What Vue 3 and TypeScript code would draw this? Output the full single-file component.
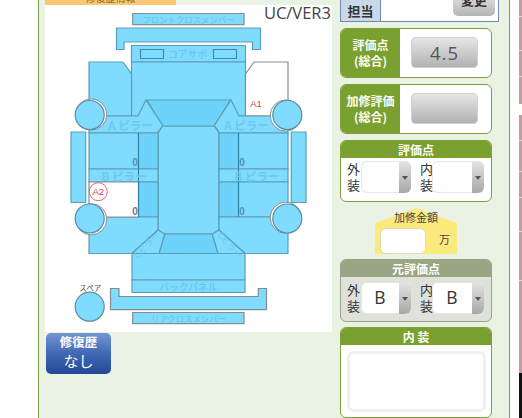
<script setup lang="ts">
const fill = '#7fdcff'
const dark = '#6dd3fb'
const edge = '#5d9db5'
const white = '#ffffff'
const gray = '#858d90'

interface Shape { p: string; f: string; s: string }

const mirror = (pts: string): string =>
  pts.split(' ').map((pair) => {
    const [x, y] = pair.split(',').map(Number)
    return `${377 - x},${y}`
  }).join(' ')

const leftSide: Shape[] = [
  { p: '89,62 123,62 131.5,74 131.5,116 89,116', f: fill, s: edge },
  { p: '89,116 138,116 146,100 162.7,125.5 157.5,133 89,133', f: fill, s: edge },
  { p: '89,133 138.5,133 138.5,169 89,169', f: fill, s: edge },
  { p: '138.5,133 158,133 158,169 138.5,169', f: dark, s: edge },
  { p: '89,169 158,169 158,182 89,182', f: fill, s: edge },
  { p: '138.5,182 158,182 158,217 138.5,217', f: dark, s: edge },
  { p: '89,217 158,217 158,230 132,253.5 89,253.5', f: fill, s: edge },
  { p: '158,230 164.7,234 159,253.5 132,253.5', f: fill, s: edge },
  { p: '71,132 85.7,132 85.7,202.5 71,202.5', f: fill, s: edge },
]
const rightSide: Shape[] = [
  { p: mirror('89,62 123,62 131.5,74 131.5,116 89,116'), f: white, s: gray },
  { p: mirror('89,116 138,116 146,100 162.7,125.5 157.5,133 89,133'), f: fill, s: edge },
  { p: mirror('89,133 138.5,133 138.5,169 89,169'), f: fill, s: edge },
  { p: mirror('138.5,133 158,133 158,169 138.5,169'), f: dark, s: edge },
  { p: mirror('89,169 158,169 158,182 89,182'), f: fill, s: edge },
  { p: mirror('89,182 138.5,182 138.5,217 89,217'), f: fill, s: edge },
  { p: mirror('138.5,182 158,182 158,217 138.5,217'), f: dark, s: edge },
  { p: mirror('89,217 158,217 158,230 132,253.5 89,253.5'), f: fill, s: edge },
  { p: mirror('158,230 164.7,234 159,253.5 132,253.5'), f: fill, s: edge },
  { p: mirror('71,132 85.7,132 85.7,202.5 71,202.5'), f: fill, s: edge },
]
const center: Shape[] = [
  { p: '132.7,13.5 244,13.5 244,24.7 132.7,24.7', f: fill, s: gray },
  { p: '116.5,28 260.5,28 260.5,49.5 252.5,49.5 252.5,42 124,42 124,49.5 116.5,49.5', f: fill, s: edge },
  { p: '131.5,45.5 245.5,45.5 245.5,62 131.5,62', f: fill, s: edge },
  { p: '131.5,62 245.5,62 245.5,116 131.5,116', f: fill, s: edge },
  { p: '140.5,49.5 163.5,49.5 163.5,58.5 140.5,58.5', f: fill, s: '#3f8aa6' },
  { p: '213.5,49.5 236.5,49.5 236.5,58.5 213.5,58.5', f: fill, s: '#3f8aa6' },
  { p: '158,133 162.7,126 214.3,126 219,133 219,230 212.3,234 164.7,234 158,230', f: fill, s: edge },
  { p: '146.7,100 230.3,100 214.3,126 162.7,126', f: dark, s: edge },
  { p: '164.7,234 212.3,234 218,253.5 159,253.5', f: dark, s: edge },
  { p: '132,253.5 245,253.5 245,280 132,280', f: fill, s: edge },
  { p: '132,280 245,280 245,292.5 132,292.5', f: fill, s: edge },
  { p: '110.5,288.5 119,288.5 119,296.5 258.3,296.5 258.3,288.5 266.5,288.5 266.5,309.7 110.5,309.7', f: fill, s: gray },
  { p: '132.7,312.5 244,312.5 244,323.7 132.7,323.7', f: fill, s: gray },
]
const shapes: Shape[] = [
  ...center,
  ...leftSide,
  ...rightSide,
  { p: '89,182 138.5,182 138.5,217 89,217', f: white, s: gray },
]

interface Tire { x: number; y: number; dx: number; dy: number }
const tires: Tire[] = [
  { x: 89.7, y: 115, dx: 1.5, dy: -0.5 },
  { x: 287.3, y: 115, dx: -1.5, dy: 0.5 },
  { x: 89.7, y: 218.5, dx: 1.5, dy: 0.8 },
  { x: 287.3, y: 218.5, dx: -1.5, dy: -0.8 },
]

interface Label { t: string; x: number; y: number; c: string }
const labels: Label[] = [
  { t: 'フロントクロスメンバー', x: 188.5, y: 19, c: 'lbl-xs' },
  { t: 'コアサポ', x: 187.5, y: 54, c: 'lbl-sm' },
  { t: 'バックパネル', x: 188.5, y: 286.5, c: 'lbl-sm' },
  { t: 'リアクロスメンバー', x: 188.5, y: 318, c: 'lbl-xs' },
  { t: 'A ピラー', x: 130.5, y: 125, c: 'lbl-lg' },
  { t: 'A ピラー', x: 246.5, y: 125, c: 'lbl-lg' },
  { t: 'B ピラー', x: 124, y: 175.5, c: 'lbl-lg' },
  { t: 'B ピラー', x: 257, y: 175.5, c: 'lbl-lg' },
  { t: '0', x: 135, y: 162.5, c: 'zero' },
  { t: '0', x: 242, y: 162.5, c: 'zero' },
  { t: '0', x: 135, y: 211.5, c: 'zero-dark' },
  { t: '0', x: 242, y: 211.5, c: 'zero' },
  { t: 'スペア', x: 90.3, y: 287, c: 'spare' },
  { t: 'A1', x: 256, y: 103, c: 'mark' },
  { t: 'A2', x: 98.3, y: 191.5, c: 'mark' },
]
const stripes: number[] = [16, 50, 76, 140, 171, 197, 231, 280]

const scoreA = [
  { label: '外装', value: '', cls: 'sel-a' },
  { label: '内装', value: '', cls: 'sel-b' },
]
const scoreB = [
  { label: '外装', value: 'B', cls: 'sel-a' },
  { label: '内装', value: 'B', cls: 'sel-b' },
]
</script>

<template>
  <div class="page">
    <main class="panel">
      <section class="left">
        <div class="tab"><span>修復歴情報</span></div>
        <div class="canvas">
          <span class="ver">UC/VER3</span>
          <svg class="car" viewBox="45 5 287 327" width="287" height="327">
            <polygon v-for="(s, i) in shapes" :key="i" :points="s.p" :fill="s.f" :stroke="s.s" stroke-width="1.2" />
            <line x1="138.5" y1="133" x2="138.5" y2="217" stroke="#2f7f9c" stroke-width="1" />
            <line x1="238.5" y1="133" x2="238.5" y2="217" stroke="#2f7f9c" stroke-width="1" />
            <g v-for="(t, i) in tires" :key="'t' + i">
              <circle :cx="t.x + t.dx" :cy="t.y + t.dy" r="15.6" fill="#fff" stroke="#8a8a8a" stroke-width="1" />
              <circle :cx="t.x" :cy="t.y" r="14.5" fill="#7fdcff" stroke="#5d8fa3" stroke-width="1.2" />
            </g>
            <circle cx="89.7" cy="306.7" r="14.5" fill="#7fdcff" stroke="#5d8fa3" stroke-width="1.2" />
            <circle cx="98.3" cy="191.7" r="9" fill="#fff" stroke="#e0414f" stroke-width="0.8" />
            <text v-for="(l, i) in labels" :key="'l' + i" :x="l.x" :y="l.y" :class="l.c" text-anchor="middle" dominant-baseline="central">{{ l.t }}</text>
            <text class="lbl-rot" transform="translate(146.5 245) rotate(-48)" text-anchor="middle" dominant-baseline="central">Cピラー</text>
            <text class="lbl-rot" transform="translate(230.5 245) rotate(48)" text-anchor="middle" dominant-baseline="central">Cピラー</text>
          </svg>
        </div>
        <button class="history" type="button">
          <b>修復歴</b>
          <span>なし</span>
        </button>
      </section>

      <section class="right">
        <div class="staff">
          <div class="staff-label">担当</div>
          <div class="staff-body"><button class="change" type="button">変更</button></div>
        </div>

        <div class="score-card">
          <div class="score-head">評価点<br />(総合)</div>
          <div class="score-body"><button class="score-btn" type="button">4.5</button></div>
        </div>
        <div class="score-card second">
          <div class="score-head">加修評価<br />(総合)</div>
          <div class="score-body"><button class="score-btn" type="button"></button></div>
        </div>

        <div class="card card-score">
          <div class="card-head">評価点</div>
          <div class="sel-row">
            <template v-for="g in scoreA" :key="g.label">
              <span class="sel-label">{{ g.label }}</span>
              <div class="sel" :class="g.cls"><span class="sel-val">{{ g.value }}</span><span class="sel-arrow"></span></div>
            </template>
          </div>
        </div>

        <div class="repair">
          <div class="repair-title">加修金額</div>
          <div class="repair-row">
            <div class="repair-input"></div>
            <span class="repair-unit">万</span>
          </div>
        </div>

        <div class="card card-orig">
          <div class="card-head head-gray">元評価点</div>
          <div class="sel-row">
            <template v-for="g in scoreB" :key="g.label">
              <span class="sel-label">{{ g.label }}</span>
              <div class="sel" :class="g.cls"><span class="sel-val">{{ g.value }}</span><span class="sel-arrow"></span></div>
            </template>
          </div>
        </div>

        <div class="card card-inner">
          <div class="card-head">内 装</div>
          <div class="note-wrap"><div class="note"></div></div>
        </div>
      </section>
    </main>

    <aside class="edge">
      <div class="pink pink-a">
        <i v-for="y in stripes.slice(0, 3)" :key="y" class="sep"></i>
      </div>
      <div class="pink pink-b">
        <i v-for="y in stripes.slice(3)" :key="y" class="sep"></i>
      </div>
      <div class="black"></div>
    </aside>
  </div>
</template>

<style scoped>
.page {
  width: 522px;
  height: 418px;
  overflow: hidden;
  background: #fff;
  display: flex;
  padding-left: 38px;
  box-sizing: border-box;
  font-family: "Noto Sans CJK JP", "Noto Sans", sans-serif;
}
.panel {
  width: 472px;
  height: 418px;
  box-sizing: border-box;
  flex: none;
  display: flex;
  background: #eaf2e3;
  border-left: 1px solid #7f9c4a;
  border-right: 1px solid #7f9c4a;
  padding-left: 6px;
}
.left {
  width: 287px;
  flex: none;
  display: flex;
  flex-direction: column;
}
.tab {
  width: 131px;
  height: 5px;
  background: #fbc973;
  overflow: hidden;
  text-align: center;
  font-size: 10px;
  line-height: 4px;
  color: #8a6a30;
}
.tab span { display: block; margin-top: -4px; }
.canvas {
  position: relative;
  width: 287px;
  height: 327px;
  background: #fff;
}
.car { display: block; }
.ver {
  position: absolute;
  right: 1px;
  top: -2px;
  font-family: "Open Sans", sans-serif;
  font-size: 16.5px;
  line-height: 19px;
  color: #444;
}
.lbl-xs { font-size: 8.4px; fill: #66c8ec; font-weight: 500; }
.lbl-sm { font-size: 9.8px; fill: #66c8ec; font-weight: 500; }
.lbl-lg { font-size: 11.5px; fill: #6ccaee; font-weight: 700; }
.lbl-rot { font-size: 9px; fill: #66c8ec; }
.zero { font-size: 10px; font-weight: 700; fill: #4f93ad; font-family: "Liberation Sans", sans-serif; }
.zero-dark { font-size: 10px; font-weight: 700; fill: #777; font-family: "Liberation Sans", sans-serif; }
.spare { font-size: 7.5px; fill: #555; }
.mark { font-size: 9.5px; fill: #e23b4b; font-family: "Liberation Sans", sans-serif; }
.history {
  margin: 1px 0 0 1px;
  width: 65px;
  height: 41px;
  padding: 0 0 4px;
  border: 0;
  border-radius: 5px;
  background: linear-gradient(#7396d4, #4069b4 50%, #23489a);
  color: #fff;
  display: flex;
  flex-direction: column;
  align-items: center;
  justify-content: center;
  font-family: inherit;
}
.history b { font-size: 12.5px; line-height: 18px; }
.history span { font-size: 15px; line-height: 19px; font-weight: 400; }

.right {
  width: 159px;
  margin-left: 8px;
  flex: none;
  display: flex;
  flex-direction: column;
  align-items: flex-start;
}
.staff {
  width: 159px;
  height: 22px;
  box-sizing: border-box;
  display: flex;
  border: 1px solid #6f8ca8;
  border-top: 0;
  background: #fff;
}
.staff-label {
  width: 39px;
  background: #c9d9ec;
  border-right: 1px solid #6f8ca8;
  text-align: center;
  font-size: 13px;
  font-weight: 700;
  line-height: 21px;
  color: #333;
}
.staff-body {
  flex: 1;
  display: flex;
  justify-content: flex-end;
  align-items: flex-end;
  padding: 0 3px 5px 0;
}
.change {
  width: 42px;
  height: 24px;
  flex: none;
  padding: 0 0 9px;
  border: 0;
  border-radius: 5px;
  background: linear-gradient(#e8e8e8, #b4b4b4);
  font-family: inherit;
  font-size: 13px;
  line-height: 15px;
  font-weight: 700;
  color: #333;
}
.score-card {
  width: 152px;
  height: 50px;
  margin-top: 6px;
  box-sizing: border-box;
  display: flex;
  border: 1px solid #7fa03a;
  border-radius: 6px;
  background: #fff;
  overflow: hidden;
}
.score-head {
  width: 59px;
  flex: none;
  background: #7aa02f;
  color: #fdfdf0;
  text-align: center;
  font-size: 12px;
  font-weight: 700;
  line-height: 16px;
  display: flex;
  align-items: center;
  justify-content: center;
}
.score-body {
  flex: 1;
  padding: 8px 0 0 11px;
}
.score-btn {
  display: block;
  width: 67px;
  height: 31px;
  padding: 0;
  border: 0;
  border-radius: 5px;
  background: linear-gradient(#e8e8e8, #b0b0b0);
  box-shadow: inset 0 0 0 1px #d0d0d0;
  font-family: "Open Sans", sans-serif;
  font-size: 18.5px;
  letter-spacing: 1px;
  color: #555;
}
.card {
  width: 152px;
  box-sizing: border-box;
  border: 1px solid #7fa03a;
  border-radius: 6px;
  background: #fff;
  overflow: hidden;
}
.card-score { height: 62px; margin-top: 6px; }
.card-head {
  height: 17px;
  background: #7aa02f;
  color: #fdfdf0;
  text-align: center;
  font-size: 12px;
  line-height: 17px;
  font-weight: 700;
}
.head-gray { background: #9aa583; color: #fff; }
.sel-row {
  display: flex;
  align-items: flex-start;
  padding: 3px 0 0 6px;
}
.sel-label {
  width: 14px;
  flex: none;
  font-size: 13px;
  line-height: 16px;
  color: #333;
  white-space: normal;
  word-break: break-all;
}
.sel {
  height: 32px;
  flex: none;
  display: flex;
  border-radius: 6px;
  overflow: hidden;
  background: #fff;
  box-shadow: inset 0 0 0 1px #e6e6e6;
}
.sel-a { width: 50px; margin-right: 9px; }
.sel-b { width: 52px; margin-left: -2px; }
.sel-val {
  flex: 1;
  text-align: center;
  font-family: "Open Sans", sans-serif;
  font-size: 17.5px;
  line-height: 30px;
  color: #333;
}
.sel-arrow {
  width: 12px;
  flex: none;
  position: relative;
  background: linear-gradient(#e4e4e4, #a8a8a8);
}
.sel-arrow::after {
  content: "";
  position: absolute;
  left: 3px;
  top: 15px;
  border-left: 3px solid transparent;
  border-right: 3px solid transparent;
  border-top: 4px solid #555;
}
.repair {
  position: relative;
  width: 82px;
  height: 46px;
  margin: 6px 0 5px 35px;
  padding-top: 2px;
  box-sizing: border-box;
  display: flex;
  flex-direction: column;
}
.repair::before {
  content: "";
  position: absolute;
  inset: 0;
  background: #fbe97c;
  clip-path: polygon(50% 0, 100% 33%, 100% 100%, 0 100%, 0 33%);
}
.repair-title {
  position: relative;
  text-align: center;
  font-size: 11px;
  line-height: 14px;
  color: #444;
}
.repair-row {
  position: relative;
  display: flex;
  align-items: flex-start;
  padding-left: 5px;
  margin-top: 4px;
}
.repair-input {
  width: 46px;
  height: 26px;
  box-sizing: border-box;
  background: #fff;
  border: 1px solid #e3d8b0;
  border-radius: 6px;
}
.repair-unit {
  margin: 3px 0 0 13px;
  font-size: 11px;
  line-height: 16px;
  color: #444;
}
.card-orig {
  height: 63px;
  background: #dfe2da;
  border-color: #9aa583;
}
.card-orig .sel-row { padding-top: 5px; }
.card-inner {
  height: 91px;
  margin-top: 5px;
}
.note-wrap { padding: 6px 5px 0 6px; }
.note {
  height: 61px;
  box-sizing: border-box;
  background: #fff;
  border: 3px solid #f0f0f0;
  border-radius: 7px;
}

.edge {
  margin-left: 9px;
  width: 3px;
  flex: none;
  display: flex;
  flex-direction: column;
}
.pink { background: #c99a9e; display: flex; flex-direction: column; }
.pink-a { height: 104px; margin-bottom: 11px; }
.pink-b { height: 258px; }
.sep { display: block; height: 1px; background: #e6d4d6; }
.pink-a .sep:nth-child(1) { margin-top: 16px; }
.pink-a .sep:nth-child(2) { margin-top: 33px; }
.pink-a .sep:nth-child(3) { margin-top: 25px; }
.pink-b .sep:nth-child(1) { margin-top: 25px; }
.pink-b .sep:nth-child(2) { margin-top: 30px; }
.pink-b .sep:nth-child(3) { margin-top: 25px; }
.pink-b .sep:nth-child(4) { margin-top: 33px; }
.pink-b .sep:nth-child(5) { margin-top: 48px; }
.black { flex: 1; background: #111; }
</style>
